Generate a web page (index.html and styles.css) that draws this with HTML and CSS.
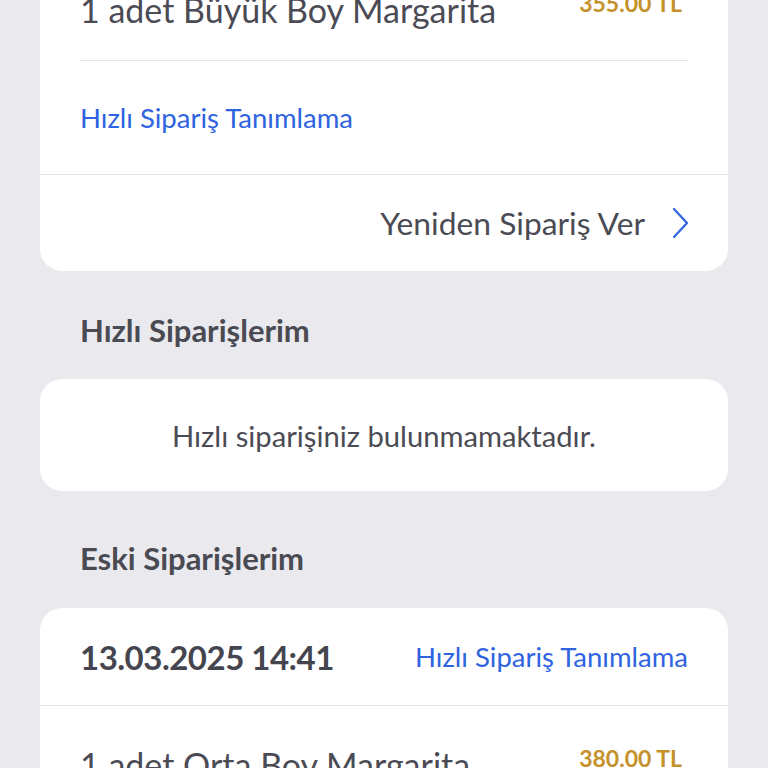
FILE: index.html
```html
<!DOCTYPE html>
<html lang="tr">
<head>
<meta charset="utf-8">
<link rel="stylesheet" href="styles.css">
</head>
<body>
<div class="page">
  <section class="card">
    <div class="inset">
      <div class="item-row">
        <span class="item-name">1 adet Büyük Boy Margarita</span>
        <span class="price">355.00 TL</span>
      </div>
      <div class="link-row">
        <a class="link">Hızlı Sipariş Tanımlama</a>
      </div>
    </div>
    <div class="footer-row">
      <span class="reorder">Yeniden Sipariş Ver</span>
      <svg class="chev" width="20" height="32" viewBox="0 0 20 32"><path d="M4 2 L17 16 L4 30" fill="none" stroke="#2f63e0" stroke-width="2.2" stroke-linecap="round" stroke-linejoin="round"/></svg>
    </div>
  </section>

  <h2 class="section-title first">Hızlı Siparişlerim</h2>
  <section class="card empty">
    <p class="empty-text">Hızlı siparişiniz bulunmamaktadır.</p>
  </section>

  <h2 class="section-title second">Eski Siparişlerim</h2>
  <section class="card">
    <div class="date-row">
      <span class="date">13.03.2025 14:41</span>
      <a class="link">Hızlı Sipariş Tanımlama</a>
    </div>
    <div class="inset">
      <div class="item-row">
        <span class="item-name">1 adet Orta Boy Margarita</span>
        <span class="price">380.00 TL</span>
      </div>
    </div>
  </section>
</div>
</body>
</html>
```

FILE: styles.css
```css
html, body {
  margin: 0;
  padding: 0;
  background: #e9e9ee;
  font-family: "Lato", "Liberation Sans", sans-serif;
  color: #4a4a54;
  overflow: hidden;
}
.page {
  margin-top: -49px;
  padding: 0 40px;
}
.card {
  background: #ffffff;
  border-radius: 22px;
  overflow: hidden;
}
.inset {
  padding: 0 40px;
}
.item-row {
  display: flex;
  align-items: flex-start;
  justify-content: space-between;
  padding: 42px 6px 33px 0;
  border-bottom: 1px solid #e6e6ea;
  line-height: 34px;
}
.item-name {
  font-size: 34px;
  color: #4b4b55;
}
.price {
  font-size: 23px;
  line-height: 24px;
  margin-top: -2px;
  font-weight: 700;
  color: #c4912b;
}
.link-row {
  height: 113px;
  display: flex;
  align-items: center;
}
.link {
  font-size: 27.5px;
  color: #2f63e0;
  text-decoration: none;
}
.footer-row {
  border-top: 1px solid #e6e6ea;
  height: 96px;
  display: flex;
  align-items: center;
  justify-content: flex-end;
  padding: 0 38px 0 40px;
  gap: 25px;
}
.reorder {
  font-size: 31.8px;
  color: #4b4b55;
}
.chev {
  display: block;
}
.section-title {
  margin: 0;
  font-size: 31px;
  font-weight: 700;
  line-height: 32px;
  color: #4a4a52;
  padding: 0 40px;
}
.section-title.first {
  padding-top: 43px;
  padding-bottom: 33px;
}
.section-title.second {
  padding-top: 51px;
  padding-bottom: 34px;
}
.empty {
  height: 112px;
  display: flex;
  align-items: center;
  justify-content: center;
}
.empty-text {
  margin: 0;
  font-size: 29.2px;
  color: #4b4b55;
}
.date-row {
  height: 97px;
  display: flex;
  align-items: center;
  justify-content: space-between;
  padding: 0 40px;
  border-bottom: 1px solid #e6e6ea;
}
.date {
  font-size: 33px;
  font-weight: 700;
  color: #45454f;
  letter-spacing: -0.5px;
}
```
